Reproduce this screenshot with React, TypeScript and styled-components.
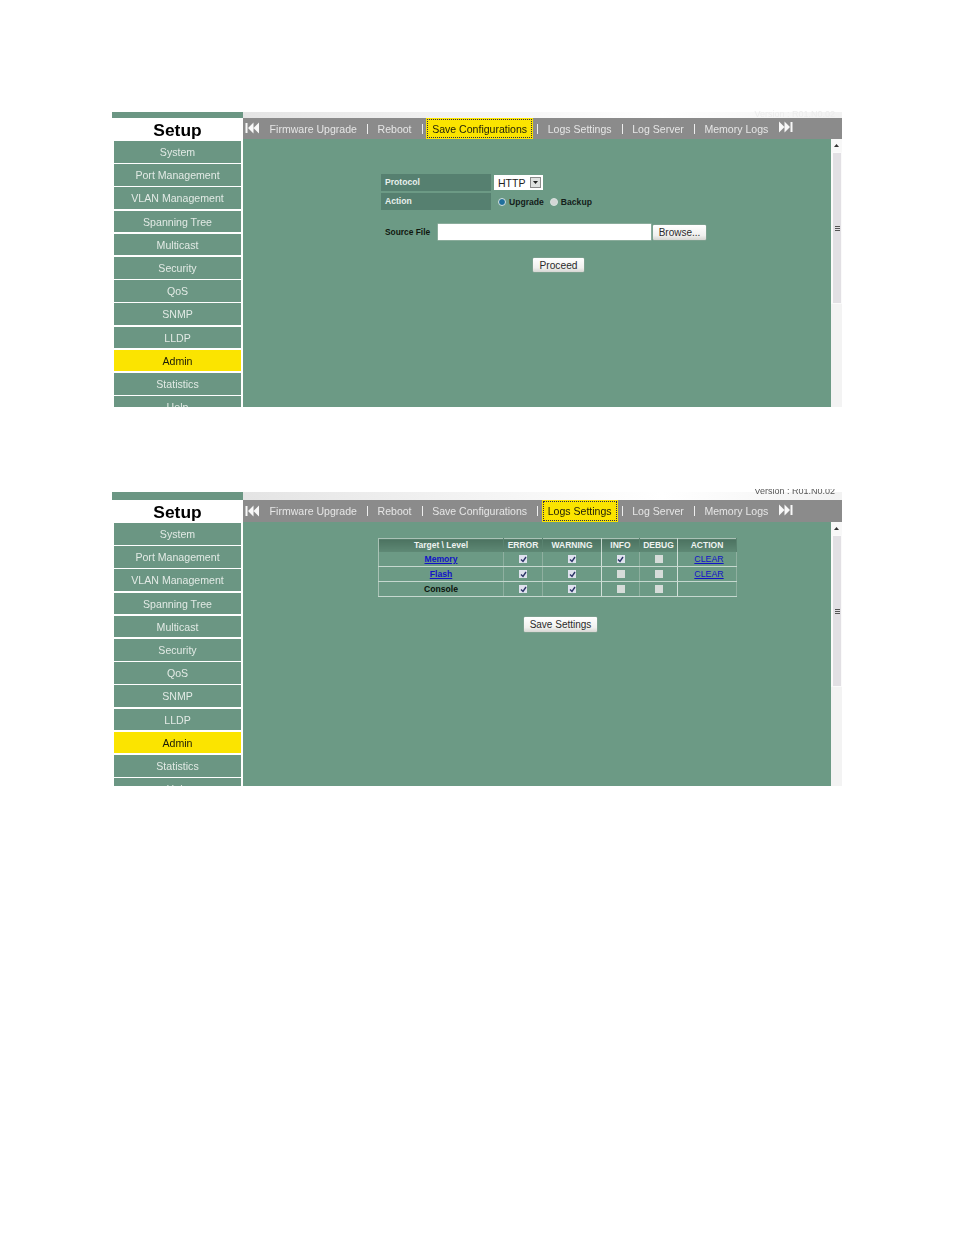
import styled, { createGlobalStyle } from "styled-components";

const FONT = `"Liberation Sans", Arial, sans-serif`;

const MENU = [
  "System",
  "Port Management",
  "VLAN Management",
  "Spanning Tree",
  "Multicast",
  "Security",
  "QoS",
  "SNMP",
  "LLDP",
  "Admin",
  "Statistics",
  "Help",
];

const TABS = [
  "Firmware Upgrade",
  "Reboot",
  "Save Configurations",
  "Logs Settings",
  "Log Server",
  "Memory Logs",
];

const LOG_ROWS = [
  { target: "Memory", link: true, levels: [true, true, true, false], clear: true },
  { target: "Flash", link: true, levels: [true, true, false, false], clear: true },
  { target: "Console", link: false, levels: [true, true, false, false], clear: false },
];

const GlobalStyle = createGlobalStyle`
  html, body {
    margin: 0;
    background: #fff;
  }

  body {
    font-family: ${FONT};
  }
`;

type TPanel = {
  height: number;
  bandHeight: number;
  barHeight: number;
  activeTab: string;
  versionColor: string;
  versionOffset: number;
  children: React.ReactNode;
};

const Panel = (props: TPanel) => {
  const { height, bandHeight, barHeight, activeTab, versionColor, versionOffset, children } = props;

  return (
    <PanelBox $height={height}>
      <Sidebar>
        <SideBand $height={bandHeight} />
        <SetupTitle>Setup</SetupTitle>
        {MENU.map((item) => (
          <MenuItem key={item} $active={item === "Admin"}>
            {item}
          </MenuItem>
        ))}
      </Sidebar>

      <Main>
        <TopBand $height={bandHeight}>
          <Version $color={versionColor} $offset={versionOffset}>
            Version : R01.N0.02
          </Version>
        </TopBand>

        <TabBar $height={barHeight}>
          <SkipIcon viewBox="0 0 14 12">
            <path d="M0.5 1h2v10h-2zM8.5 0.5v11L3 6zM14 0.5v11L8.5 6z" />
          </SkipIcon>

          {TABS.map((tab, index) => (
            <TabGroup key={tab}>
              {index > 0 && <TabSeparator />}
              <Tab $active={tab === activeTab}>{tab}</Tab>
            </TabGroup>
          ))}

          <NextIcon viewBox="0 0 14 12">
            <path d="M0 0.5v11L5.5 6zM5.5 0.5v11L11 6zM11.5 1h2v10h-2z" />
          </NextIcon>
        </TabBar>

        <Body>
          <Content>{children}</Content>
          <Scrollbar>
            <ScrollArrow>
              <svg width="5" height="3" viewBox="0 0 5 3">
                <path d="M2.5 0L5 3H0z" fill="#333" />
              </svg>
            </ScrollArrow>
            <ScrollThumb>
              <ScrollGrip />
            </ScrollThumb>
          </Scrollbar>
        </Body>
      </Main>
    </PanelBox>
  );
};

const CheckMark = ({ checked }: { checked: boolean }) => (
  <CheckBox $checked={checked}>
    {checked && (
      <svg width="7" height="7" viewBox="0 0 7 7">
        <path d="M1 3.5L3 5.5L6 1" fill="none" stroke="#2c3468" strokeWidth="1.4" />
      </svg>
    )}
  </CheckBox>
);

const UpgradeForm = () => (
  <FormBox>
    <FormRow>
      <FieldLabel>Protocol</FieldLabel>
      <SelectBox>
        <SelectValue>HTTP</SelectValue>
        <SelectArrow>
          <svg width="5" height="3" viewBox="0 0 5 3">
            <path d="M0 0h5L2.5 3z" fill="#222" />
          </svg>
        </SelectArrow>
      </SelectBox>
    </FormRow>

    <FormRow>
      <FieldLabel>Action</FieldLabel>
      <RadioGroup>
        <Radio $checked />
        <RadioText>Upgrade</RadioText>
        <Radio />
        <RadioText>Backup</RadioText>
      </RadioGroup>
    </FormRow>

    <SourceRow>
      <SourceLabel>Source File</SourceLabel>
      <FileField />
      <BrowseButton>Browse...</BrowseButton>
    </SourceRow>

    <ProceedButton>Proceed</ProceedButton>
  </FormBox>
);

const LogsForm = () => (
  <LogsBox>
    <LogTable>
      <colgroup>
        <col style={{ width: 125 }} />
        <col style={{ width: 39 }} />
        <col style={{ width: 59 }} />
        <col style={{ width: 38 }} />
        <col style={{ width: 38 }} />
        <col style={{ width: 59 }} />
      </colgroup>
      <thead>
        <tr>
          {["Target \\ Level", "ERROR", "WARNING", "INFO", "DEBUG", "ACTION"].map((title) => (
            <HeadCell key={title}>{title}</HeadCell>
          ))}
        </tr>
      </thead>
      <tbody>
        {LOG_ROWS.map((row) => (
          <tr key={row.target}>
            <TargetCell>
              {row.link ? <TargetLink>{row.target}</TargetLink> : row.target}
            </TargetCell>
            {row.levels.map((checked, index) => (
              <LogCell key={index}>
                <CheckMark checked={checked} />
              </LogCell>
            ))}
            <LogCell>{row.clear && <ClearLink>CLEAR</ClearLink>}</LogCell>
          </tr>
        ))}
      </tbody>
    </LogTable>

    <SaveButton>Save Settings</SaveButton>
  </LogsBox>
);

const App = () => (
  <>
    <GlobalStyle />
    <Page>
      <Panel
        height={295}
        bandHeight={6}
        barHeight={21}
        activeTab="Save Configurations"
        versionColor="#ececec"
        versionOffset={-2}
      >
        <UpgradeForm />
      </Panel>

      <Panel
        height={294}
        bandHeight={8}
        barHeight={22}
        activeTab="Logs Settings"
        versionColor="#555"
        versionOffset={-5}
      >
        <LogsForm />
      </Panel>
    </Page>
  </>
);

const Page = styled.div`
  width: 954px;
  height: 1235px;
  box-sizing: border-box;
  padding: 112px 0 0 112px;
  display: flex;
  flex-direction: column;
  gap: 85px;
  overflow: hidden;
`;

const PanelBox = styled.div<{ $height: number }>`
  width: 730px;
  height: ${({ $height }) => $height}px;
  display: flex;
  clip-path: inset(-3px 0 0 0);
  filter: blur(0.4px);
`;

const Sidebar = styled.div`
  width: 131px;
  flex: none;
  overflow: hidden;
`;

const SideBand = styled.div<{ $height: number }>`
  height: ${({ $height }) => $height}px;
  background: #6b9683;
`;

const SetupTitle = styled.div`
  height: 23px;
  line-height: 24px;
  text-align: center;
  font-size: 17.4px;
  font-weight: bold;
  color: #000;
`;

const MenuItem = styled.div<{ $active?: boolean }>`
  width: 127px;
  height: 21.7px;
  line-height: 22.6px;
  margin: 0 0 1.5px 2px;
  text-align: center;
  font-size: 10.6px;
  background: ${({ $active }) => ($active ? "#fbe400" : "#6b9683")};
  color: ${({ $active }) => ($active ? "#1a1a08" : "#e2eae5")};
`;

const Main = styled.div`
  flex: 1;
  display: flex;
  flex-direction: column;
  min-width: 0;
`;

const TopBand = styled.div<{ $height: number }>`
  height: ${({ $height }) => $height}px;
  flex: none;
  display: flex;
  justify-content: flex-end;
  align-items: flex-start;
  padding-right: 7px;
  background: linear-gradient(90deg, #e4e4e4 0%, #f4f4f4 40%, #fff 70%, #f2f2f2 100%);
`;

const Version = styled.div<{ $color: string; $offset: number }>`
  font-size: 9px;
  line-height: 9px;
  margin-top: ${({ $offset }) => $offset}px;
  white-space: nowrap;
  color: ${({ $color }) => $color};
`;

const TabBar = styled.div<{ $height: number }>`
  height: ${({ $height }) => $height}px;
  flex: none;
  display: flex;
  align-items: stretch;
  padding-left: 2px;
  background: #8b8b8b;
`;

const SkipIcon = styled.svg`
  width: 14px;
  height: 12px;
  flex: none;
  align-self: center;
  margin-right: 1px;
  margin-bottom: 1px;
  fill: #f8f8f8;
`;

const NextIcon = styled(SkipIcon)`
  margin: 0 0 3px 1px;
`;

const TabGroup = styled.div`
  display: flex;
  align-items: stretch;
`;

const TabSeparator = styled.div`
  width: 1px;
  height: 10px;
  align-self: center;
  background: #eeeeee;
`;

const Tab = styled.div<{ $active?: boolean }>`
  margin: 0 4px 0 3.6px;
  padding: 0 6px;
  display: flex;
  align-items: center;
  white-space: nowrap;
  font-size: 10.55px;
  background: ${({ $active }) => ($active ? "#fbe400" : "transparent")};
  color: ${({ $active }) => ($active ? "#1c1c08" : "#e6e6e6")};
  outline: ${({ $active }) => ($active ? "1px dotted #2a2a50" : "none")};
  outline-offset: -2px;
`;

const Body = styled.div`
  flex: 1;
  display: flex;
  min-height: 0;
`;

const Content = styled.div`
  flex: 1;
  min-width: 0;
  background: #6c9a85;
`;

const Scrollbar = styled.div`
  width: 11px;
  flex: none;
  display: flex;
  flex-direction: column;
  background: #f3f3f3;
`;

const ScrollArrow = styled.div`
  height: 13px;
  display: flex;
  align-items: center;
  justify-content: center;
  background: #f8f8f8;
`;

const ScrollThumb = styled.div`
  height: 152px;
  display: flex;
  align-items: center;
  justify-content: center;
  box-sizing: border-box;
  border: 1px solid #fafafa;
  border-left-width: 2px;
  background: #e2e0e4;
`;

const ScrollGrip = styled.div`
  width: 5px;
  height: 5px;
  background: repeating-linear-gradient(180deg, #555 0 1px, transparent 1px 2px);
`;

const FormBox = styled.div`
  padding: 35px 0 0 138px;
`;

const FormRow = styled.div`
  display: flex;
  gap: 3px;
  margin-bottom: 2px;
`;

const FieldLabel = styled.div`
  width: 110px;
  height: 17px;
  box-sizing: border-box;
  padding-left: 4px;
  line-height: 17px;
  font-size: 8.6px;
  font-weight: bold;
  color: #e8f0ec;
  background: #568070;
`;

const SelectBox = styled.div`
  width: 49px;
  height: 15px;
  margin-top: 1px;
  box-sizing: border-box;
  padding: 0 2px 0 4px;
  display: flex;
  align-items: center;
  justify-content: space-between;
  background: #fff;
`;

const SelectValue = styled.span`
  font-size: 10.5px;
  color: #222;
`;

const SelectArrow = styled.div`
  width: 11px;
  height: 11px;
  display: flex;
  align-items: center;
  justify-content: center;
  background: #dfe1e0;
  border: 1px solid #8a8a8a;
  box-sizing: border-box;
`;

const RadioGroup = styled.div`
  display: flex;
  align-items: center;
  padding-left: 4px;
  height: 17px;
`;

const Radio = styled.div<{ $checked?: boolean }>`
  width: 8px;
  height: 8px;
  border-radius: 50%;
  box-sizing: border-box;
  border: 1px solid #d8e2de;
  background: ${({ $checked }) => ($checked ? "#1f6f9c" : "#d4d6d6")};
`;

const RadioText = styled.span`
  margin: 0 6px 0 3px;
  font-size: 8.6px;
  font-weight: bold;
  color: #14201a;
`;

const SourceRow = styled.div`
  display: flex;
  align-items: center;
  margin-top: 14px;
  padding-left: 4px;
`;

const SourceLabel = styled.div`
  width: 52px;
  margin-right: 1px;
  font-size: 8.4px;
  font-weight: bold;
  color: #10180f;
`;

const FileField = styled.div`
  width: 213px;
  height: 16px;
  background: #fff;
  box-shadow: 0 0 0 0.5px #a8bdb2;
`;

const PushButton = styled.div`
  box-sizing: border-box;
  display: flex;
  align-items: center;
  justify-content: center;
  font-size: 10px;
  color: #2a2a2a;
  border-radius: 1px;
  background: linear-gradient(180deg, #fff 0%, #f0f0ee 70%, #d6d6d2 100%);
  box-shadow: 0 0 0 0.5px #8aa598;
`;

const BrowseButton = styled(PushButton)`
  width: 53px;
  height: 15px;
  margin-left: 2px;
`;

const ProceedButton = styled(PushButton)`
  width: 51px;
  height: 14px;
  margin: 18px 0 0 152px;
  font-size: 10.2px;
`;

const LogsBox = styled.div`
  padding: 16px 0 0 135px;
`;

const LogTable = styled.table`
  width: 358px;
  table-layout: fixed;
  border-collapse: collapse;
  border: 1px solid #aac2b6;
`;

const HeadCell = styled.th`
  height: 13px;
  padding: 0;
  font-size: 8.5px;
  line-height: 13px;
  font-weight: bold;
  text-align: center;
  color: #eef3f0;
  background: linear-gradient(180deg, #4c7260 0%, #5f8a76 100%);
  border-right: 1px solid #5a8370;

  &:nth-child(3),
  &:nth-child(5) {
    border-right-color: #c8d8d0;
  }
`;

const LogCell = styled.td`
  height: 14px;
  padding: 0;
  font-size: 8.8px;
  line-height: 14px;
  text-align: center;
  vertical-align: middle;
  border-bottom: 1px solid #c6d8cf;
  border-right: 1px solid #8fb0a0;

  &:nth-child(3),
  &:nth-child(5) {
    border-right-color: #d2e0d9;
  }
`;

const TargetCell = styled(LogCell)`
  font-size: 8.6px;
  font-weight: bold;
  color: #0a120c;
`;

const TargetLink = styled.span`
  color: #1212c8;
  text-decoration: underline;
`;

const ClearLink = styled.span`
  margin-left: 4px;
  color: #1212c8;
  text-decoration: underline;
`;

const CheckBox = styled.div<{ $checked: boolean }>`
  width: 8px;
  height: 8px;
  margin: 0 auto;
  display: flex;
  align-items: center;
  justify-content: center;
  background: ${({ $checked }) => ($checked ? "#dfe2ee" : "#d6dcd9")};
`;

const SaveButton = styled(PushButton)`
  width: 73px;
  height: 15px;
  margin: 20px 0 0 146px;
`;

export default App;
